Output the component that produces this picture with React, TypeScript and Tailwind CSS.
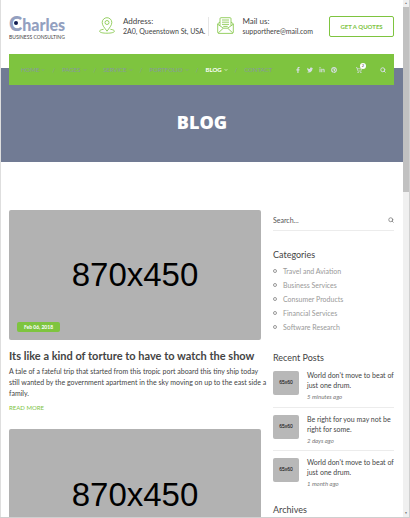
import React from "react";
import { ChevronDown, Search, ShoppingCart } from "lucide-react";
import { FaFacebookF, FaLinkedinIn, FaPinterest, FaTwitter } from "react-icons/fa";

const navItems = [
  { label: "HOME", menu: true },
  { label: "PAGES", menu: true },
  { label: "SERVICE", menu: true },
  { label: "PORTFOLIO", menu: true },
  { label: "BLOG", menu: true, active: true },
  { label: "CONTACT", menu: false },
];

const socials = [
  { label: "Facebook", Icon: FaFacebookF },
  { label: "Twitter", Icon: FaTwitter },
  { label: "LinkedIn", Icon: FaLinkedinIn },
  { label: "Pinterest", Icon: FaPinterest },
];

const categories = [
  "Travel and Aviation",
  "Business Services",
  "Consumer Products",
  "Financial Services",
  "Software Research",
];

const recentPosts = [
  { title: "World don't move to beat of just one drum.", time: "5 minutes ago" },
  { title: "Be right for you may not be right for some.", time: "2 days ago" },
  { title: "World don't move to beat of just one drum.", time: "1 month ago" },
];

function PinIcon() {
  return (
    <svg viewBox="0 0 16 17" className="h-[17px] w-4 shrink-0" fill="none" stroke="#7ec43f" strokeWidth="0.8">
      <path d="M8 14.2C5.800 11 3.200 8.600 3.200 5.500a4.800 4.800 0 0 1 9.600 0C12.800 8.600 10.200 11 8 14.200Z" />
      <circle cx="8" cy="5.500" r="2" />
      <path d="M4.600 12.300C1.900 12.700.6 13.300.6 14.200c0 1.300 3.300 2 7.400 2s7.400-.7 7.400-2c0-.9-1.300-1.500-4-1.900" />
    </svg>
  );
}

function MailIcon() {
  return (
    <svg viewBox="0 0 17 17" className="h-[17px] w-[17px] shrink-0" fill="none" stroke="#7ec43f" strokeWidth="0.8" strokeLinejoin="round">
      <path d="M3 5 .7 6.800v8.400q0 1.200 1.200 1.200h13.200q1.200 0 1.200-1.200V6.800L14 5" />
      <path d="M3 8.600V1.700q0-1 1-1h9q1 0 1 1v6.900" />
      <path d="m.7 7.200 5.600 4h4.400l5.600-4M1.200 16l5.100-4.800M15.800 16l-5.100-4.800" />
      <path d="M5 3h7M5 5.200h7M5 7.400h7M6.300 9.400h4.400" />
    </svg>
  );
}

function Header() {
  return (
    <header className="relative z-10 -mb-[17px] pl-2 pr-[9px]">
      <div className="flex h-[54px] items-start">
        <a href="#home" className="mt-[13px] block w-[90px] shrink-0">
          <span className="relative flex h-[21px] items-baseline font-black text-[#93a0c0]">
            <span className="text-[20px] leading-[21px]">C</span>
            <span className="text-[16px] leading-[21px]">harles</span>
            <svg viewBox="0 0 4 4" className="absolute left-[5px] top-2 size-1">
              <circle cx="2" cy="2" r="2" fill="#101c50" />
            </svg>
          </span>
          <span className="block whitespace-nowrap text-[5px] leading-[6px] text-[#444]">BUSINESS CONSULTING</span>
        </a>
        <div className="mt-[17px] flex gap-2">
          <PinIcon />
          <p className="-mt-px whitespace-nowrap text-[#444]">
            <span className="block text-[8px] leading-[10px]">Address:</span>
            <span className="block text-[7px] leading-[10px]">2A0, Queenstown St, USA.</span>
          </p>
        </div>
        <div className="ml-[3px] mt-[17px] flex gap-2 border-l border-[#e6e6e6] pl-2">
          <MailIcon />
          <p className="-mt-px whitespace-nowrap text-[#444]">
            <span className="block text-[8px] leading-[10px]">Mail us:</span>
            <span className="block text-[7px] leading-[10px]">supporthere@mail.com</span>
          </p>
        </div>
        <button type="button" className="ml-auto mt-4 h-[21px] w-[65px] shrink-0 rounded-[2px] border border-[#7ec43f] text-[6px] font-bold text-[#7ec43f]">
          GET A QUOTES
        </button>
      </div>
      <nav className="flex h-[31px] items-center bg-[#7ec43f] pl-3 pr-2 text-[6px] leading-[8px]">
        <ul className="flex">
          {navItems.map((item, i) => (
            <li key={item.label} className="flex items-center">
              {i > 0 && <span className="mx-[7px] text-[#8797a0]">/</span>}
              <a href="#nav" className={item.active ? "flex items-center gap-0.5 font-bold text-white" : "flex items-center gap-0.5 text-[#8797a0]"}>
                {item.label}
                {item.menu && <ChevronDown className="size-1" strokeWidth={4} />}
              </a>
            </li>
          ))}
        </ul>
        <div className="ml-auto flex items-center gap-1.5 text-[#d5dde2]">
          {socials.map(({ label, Icon }) => (
            <a key={label} href="#social" aria-label={label}>
              <Icon className="size-1.5" />
            </a>
          ))}
        </div>
        <button type="button" aria-label="Cart" className="relative ml-[19px] text-[#d5dde2]">
          <ShoppingCart className="size-1.5" strokeWidth={3} />
          <span className="absolute -right-1 -top-1 size-1.5 rounded-full bg-white text-center text-[4px] leading-[6px] text-[#444]">2</span>
        </button>
        <button type="button" aria-label="Search" className="ml-[18px] text-[#d5dde2]">
          <Search className="size-1.5" strokeWidth={4} />
        </button>
      </nav>
    </header>
  );
}

function Article() {
  return (
    <article>
      <div className="relative flex aspect-[870/450] items-center justify-center rounded-[2px] bg-[#b2b2b2]">
        <span className="font-['Liberation_Sans',Arial,sans-serif] text-[33px] leading-9 text-black">870x450</span>
        <time className="absolute bottom-2 left-2 h-[10px] w-[43px] rounded-[2px] bg-[#7ec43f] text-center text-[5px] font-bold leading-[10px] text-white">
          Feb 06, 2018
        </time>
      </div>
      <h2 className="mt-[9px] whitespace-nowrap text-[11px] font-bold leading-[14px] text-[#444]">
        Its like a kind of torture to have to watch the show
      </h2>
      <p className="-mr-2 mt-[3px] text-[7px] leading-[11px] text-[#444]">
        A tale of a fateful trip that started from this tropic port aboard this tiny ship today still wanted by the
        government apartment in the sky moving on up to the east side a family.
      </p>
      <a href="#more" className="mt-1 block text-[6px] leading-[10px] text-[#7ec43f]">
        READ MORE
      </a>
    </article>
  );
}

function Sidebar() {
  return (
    <aside className="w-[121px] shrink-0">
      <form className="flex h-[21px] items-center border-b border-[#ececec]">
        <input
          type="text"
          aria-label="Search"
          placeholder="Search..."
          className="min-w-0 flex-1 text-[7px] leading-[10px] outline-none placeholder:text-[#555]"
        />
        <button type="button" aria-label="Submit search" className="text-[#777]">
          <Search className="size-1.5" strokeWidth={3} />
        </button>
      </form>
      <h3 className="mt-[17px] text-[9px] leading-[14px] text-[#444]">Categories</h3>
      <ul className="mt-[2px]">
        {categories.map((name) => (
          <li key={name} className="flex h-[14px] items-center gap-1.5">
            <span className="size-1 rounded-full border border-[#999]" />
            <a href="#category" className="text-[7px] leading-[10px] text-[#999]">{name}</a>
          </li>
        ))}
      </ul>
      <h3 className="mt-[17px] text-[9px] leading-[14px] text-[#444]">Recent Posts</h3>
      <ul className="mt-1.5">
        {recentPosts.map((post, i) => (
          <li key={i} className={i > 0 ? "flex h-[43px] gap-2 border-t border-[#ececec] pt-[7px]" : "flex h-9 gap-2"}>
            <span className="flex h-6 w-[26px] shrink-0 items-center justify-center rounded-[2px] bg-[#b8b8b8] font-['Liberation_Sans',Arial,sans-serif] text-[5px] text-black">
              65x60
            </span>
            <div className="-mt-px min-w-0">
              <a href="#post" className="block text-[7px] leading-[10px] text-[#444]">{post.title}</a>
              <time className="block text-[6px] italic leading-[14px] text-[#777]">{post.time}</time>
            </div>
          </li>
        ))}
      </ul>
      <h3 className="mt-[10px] text-[9px] leading-[14px] text-[#444]">Archives</h3>
    </aside>
  );
}

export default function App() {
  return (
    <div className="flex h-screen overflow-hidden border-b border-[#cfcfcf] bg-white font-[Lato,'Open_Sans',sans-serif]">
      <div className="min-w-0 flex-1 overflow-hidden border-l border-[#dedede]">
        <Header />
        <section className="flex h-[94px] items-center justify-center bg-[#717b94] pt-3.5">
          <h1 className="font-['Open_Sans',sans-serif] text-[18px] font-extrabold leading-6 text-white">BLOG</h1>
        </section>
        <main className="mt-12 flex gap-3 pl-2 pr-[9px]">
          <div className="flex min-w-0 flex-1 flex-col gap-4">
            <Article />
            <Article />
          </div>
          <Sidebar />
        </main>
      </div>
      <div className="flex w-[7px] shrink-0 flex-col border-r border-[#d0d0d0] bg-[#f0f0f0]">
        <span className="flex h-[7px] items-center justify-center text-[3px] text-[#777]">▲</span>
        <span className="h-[185px] bg-[#c1c1c1]" />
        <span className="mt-auto flex h-[7px] items-center justify-center text-[3px] text-[#555]">▼</span>
      </div>
    </div>
  );
}
